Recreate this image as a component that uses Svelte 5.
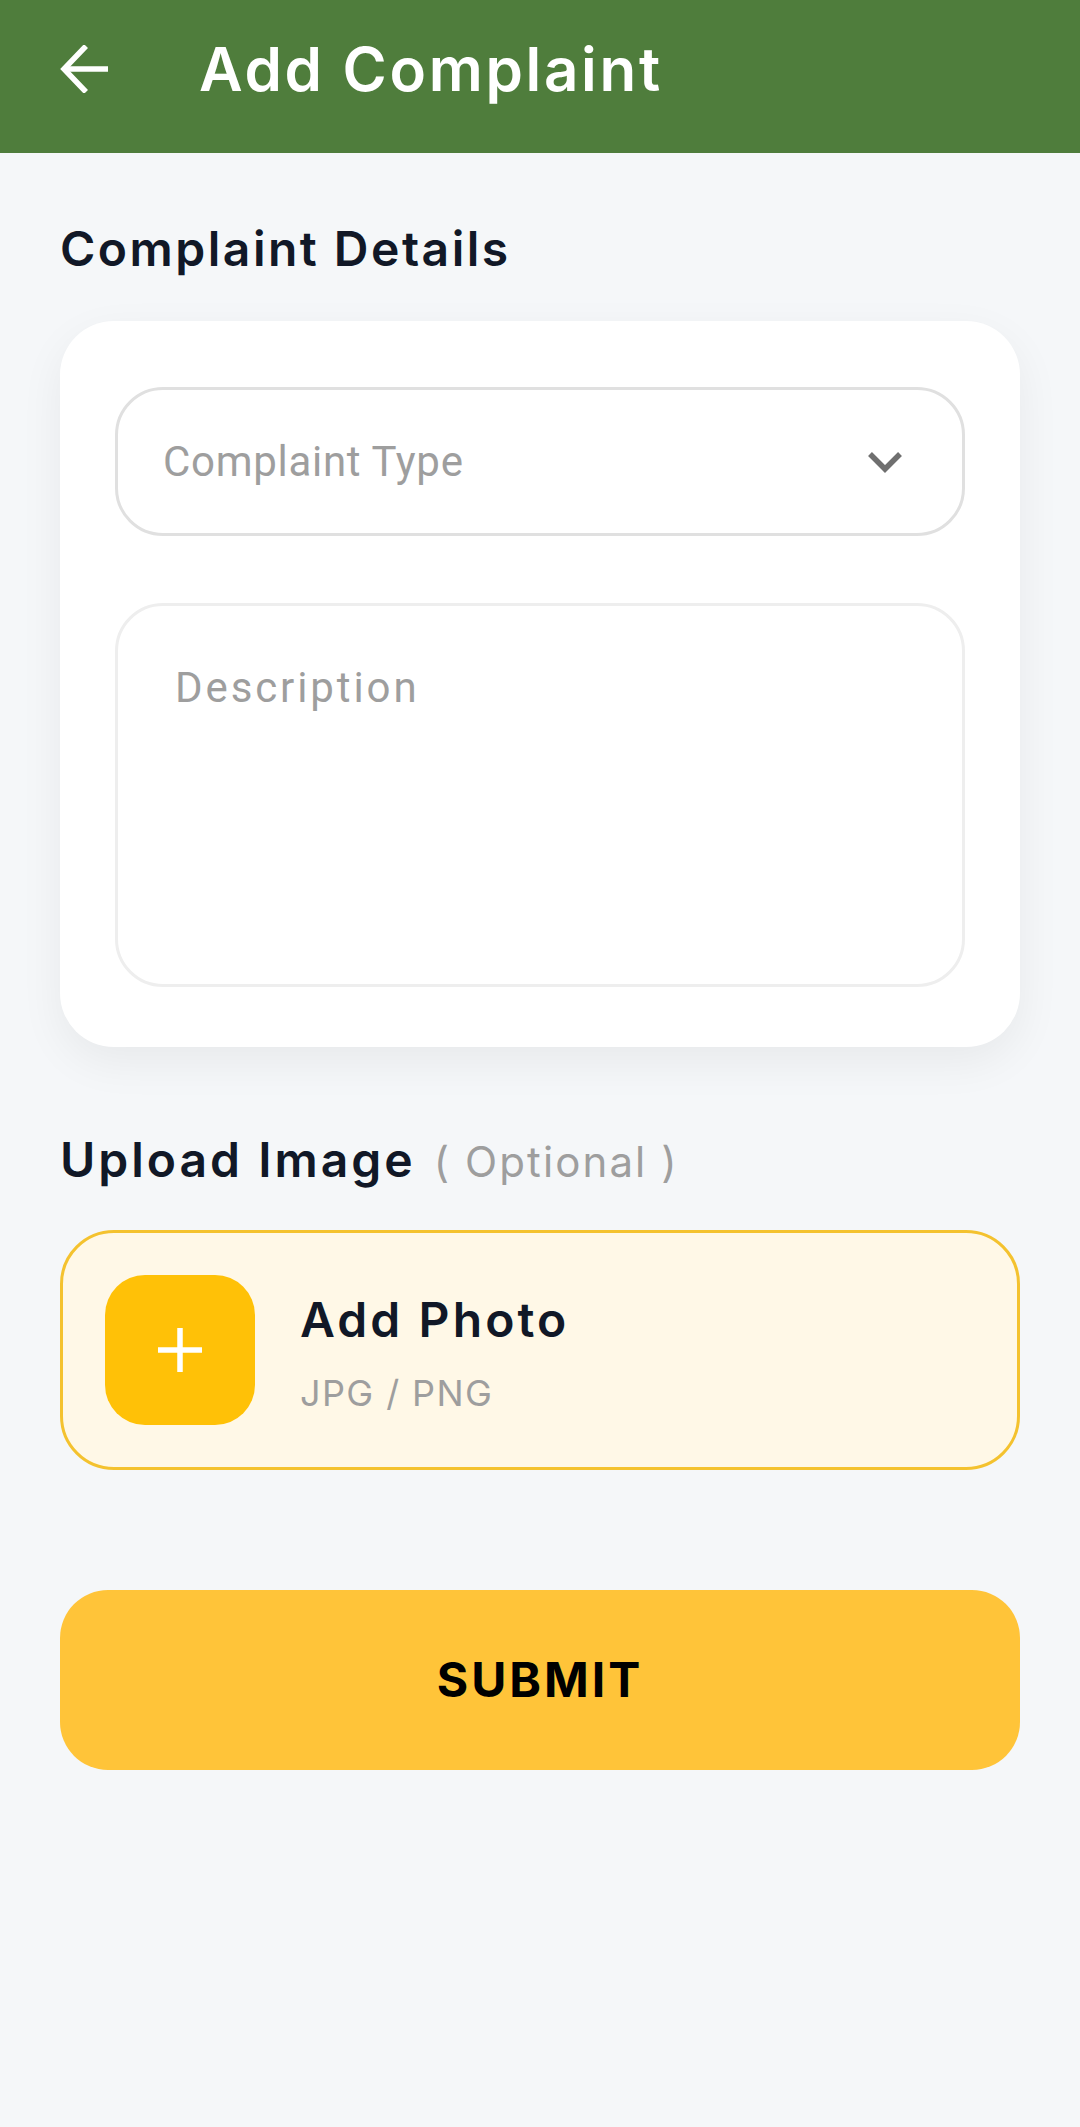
<script lang="ts">
	const title = 'Add Complaint';
</script>

<div class="page">
	<header class="bar">
		<svg class="back" viewBox="0 0 48 48" width="48" height="48" fill="none" stroke="#fff" stroke-width="5.5" aria-hidden="true">
			<path d="M48 24H4" />
			<path d="M26 1 4 24l22 23" />
		</svg>
		<h1>{title}</h1>
	</header>

	<main class="content">
		<h2 class="section">Complaint Details</h2>
		<section class="card">
			<div class="select">
				<span>Complaint Type</span>
				<svg viewBox="0 0 34 22" width="34" height="22" fill="none" stroke="#6f6f6f" stroke-width="5.5" aria-hidden="true">
					<path d="M2 3l15 15L32 3" />
				</svg>
			</div>
			<div class="area">Description</div>
		</section>

		<h2 class="section upload-head">Upload Image <span>( Optional )</span></h2>
		<div class="upload">
			<div class="plus">
				<svg viewBox="0 0 44 44" width="44" height="44" fill="none" stroke="#fff" stroke-width="5.5" aria-hidden="true">
					<path d="M22 0v44M0 22h44" />
				</svg>
			</div>
			<div class="upload-text">
				<div class="upload-title">Add Photo</div>
				<div class="upload-sub">JPG / PNG</div>
			</div>
		</div>

		<button class="submit">SUBMIT</button>
	</main>
</div>

<style>
	:global(body) {
		background: #f5f7f9;
	}

	.page {
		min-height: 2127px;
		background: #f5f7f9;
		font-family: Inter, 'Noto Sans', sans-serif;
	}

	.bar {
		height: 153px;
		box-sizing: border-box;
		background: #4f7d3c;
		display: flex;
		align-items: center;
		padding: 0 60px 15px;
		gap: 91px;
	}

	.back {
		flex: none;
	}

	.bar h1 {
		margin: 0;
		color: #fff;
		font-size: 60px;
		font-weight: 600;
		letter-spacing: 2.7px;
	}

	.content {
		padding: 67px 60px 0;
		display: flex;
		flex-direction: column;
	}

	.section {
		margin: 0;
		font-size: 48px;
		line-height: 58px;
		font-weight: 600;
		letter-spacing: 2.5px;
		color: #111827;
	}

	.card {
		margin-top: 43px;
		background: #fff;
		border-radius: 54px;
		padding: 66px 55px 60px;
		box-shadow: 0 15px 45px rgba(0, 0, 0, 0.06);
		display: flex;
		flex-direction: column;
		gap: 67px;
	}

	.select {
		height: 149px;
		box-sizing: border-box;
		border: 3px solid #e0e0e0;
		border-radius: 48px;
		display: flex;
		align-items: center;
		justify-content: space-between;
		padding: 0 60px 0 45px;
		font-family: Roboto, sans-serif;
		font-size: 42px;
		letter-spacing: 0.7px;
		color: #9e9e9e;
	}

	.area {
		height: 384px;
		box-sizing: border-box;
		border: 3px solid #eeeeee;
		border-radius: 48px;
		padding: 52px 57px;
		font-family: Roboto, sans-serif;
		font-size: 42px;
		line-height: 60px;
		letter-spacing: 2.9px;
		color: #9e9e9e;
	}

	.upload-head {
		margin-top: 84px;
		letter-spacing: 3px;
	}

	.upload-head span {
		margin-left: 3px;
		font-size: 42px;
		font-weight: 400;
		letter-spacing: 2.1px;
		color: #9e9e9e;
	}

	.upload {
		margin-top: 39px;
		height: 240px;
		box-sizing: border-box;
		background: #fff8e7;
		border: 3px solid #f4c22f;
		border-radius: 54px;
		display: flex;
		align-items: center;
		padding: 0 42px;
		gap: 45px;
	}

	.plus {
		width: 150px;
		height: 150px;
		flex: none;
		background: #ffc107;
		border-radius: 40px;
		display: flex;
		align-items: center;
		justify-content: center;
	}

	.upload-text {
		padding-top: 6px;
	}

	.upload-title {
		font-size: 48px;
		line-height: 58px;
		font-weight: 600;
		letter-spacing: 3.1px;
		color: #111827;
	}

	.upload-sub {
		margin-top: 22px;
		font-size: 36px;
		line-height: 44px;
		letter-spacing: 1.4px;
		color: #9e9e9e;
	}

	.submit {
		margin-top: 120px;
		height: 180px;
		border: none;
		border-radius: 48px;
		padding: 0 0 2px;
		background: #ffc439;
		color: #000;
		font-family: inherit;
		font-size: 48px;
		font-weight: 700;
		letter-spacing: 3px;
	}
</style>
